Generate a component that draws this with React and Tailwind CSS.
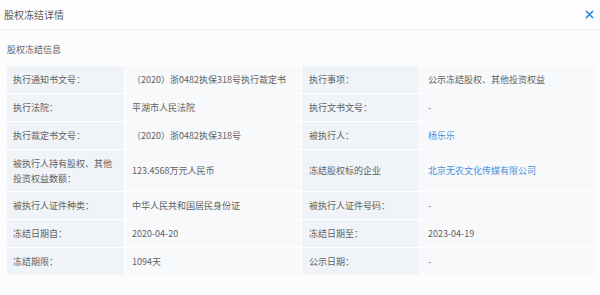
import React from 'react'

const rows = [
  ['执行通知书文号：', '（2020）浙0482执保318号执行裁定书', '执行事项：', '公示冻结股权、其他投资权益'],
  ['执行法院：', '平湖市人民法院', '执行文书文号：', '-'],
  ['执行裁定书文号：', '（2020）浙0482执保318号', '被执行人：', '杨乐乐', true],
  ['被执行人持有股权、其他投资权益数额：', '123.4568万元人民币', '冻结股权标的企业', '北京无农文化传媒有限公司', true, true],
  ['被执行人证件种类：', '中华人民共和国居民身份证', '被执行人证件号码：', '-'],
  ['冻结日期自：', '2020-04-20', '冻结日期至：', '2023-04-19'],
  ['冻结期限：', '1094天', '公示日期：', '-'],
]

export default function App() {
  return (
    <div className="w-[600px] h-[295px] bg-[#fcfcfd] text-[#5f5f5f] overflow-hidden" style={{ fontFamily: '"Noto Sans CJK SC", "Noto Sans", sans-serif' }}>
      <div className="h-[30px] flex items-center justify-between pl-[4px] pr-[6px] border-b border-[#f0eeee] bg-[#fdfdfd]">
        <span className="text-[10px] text-[#5a5a5a]">股权冻结详情</span>
        <svg width="9" height="9" viewBox="0 0 10 10" className="text-[#3f8ad6]">
          <path d="M1.5 1.5 L8.5 8.5 M8.5 1.5 L1.5 8.5" stroke="currentColor" strokeWidth="1.8" strokeLinecap="round" />
        </svg>
      </div>
      <div className="pl-[7px] pt-[13px]">
        <div className="text-[9px] leading-[14px] mb-[9px]">股权冻结信息</div>
        <div className="grid grid-cols-[117px_176px_117px_176px] gap-y-px gap-x-px bg-white w-[587px] text-[9px]">
          {rows.map(([l1, v1, l2, v2, link, tall], i) => (
            <React.Fragment key={i}>
              <div className={`bg-[#f0f4f8] pl-[6px] pr-[4px] flex items-center leading-[15px] ${tall ? 'h-[41px]' : 'h-[27px]'}`}>{l1}</div>
              <div className="bg-[#f8f9fb] pl-[7px] flex items-center">{v1}</div>
              <div className="bg-[#f0f4f8] pl-[7px] flex items-center">{l2}</div>
              <div className={`bg-[#f8f9fb] pl-[8px] flex items-center ${link ? 'text-[#4a90d9]' : ''}`}>{v2}</div>
            </React.Fragment>
          ))}
        </div>
      </div>
    </div>
  )
}
